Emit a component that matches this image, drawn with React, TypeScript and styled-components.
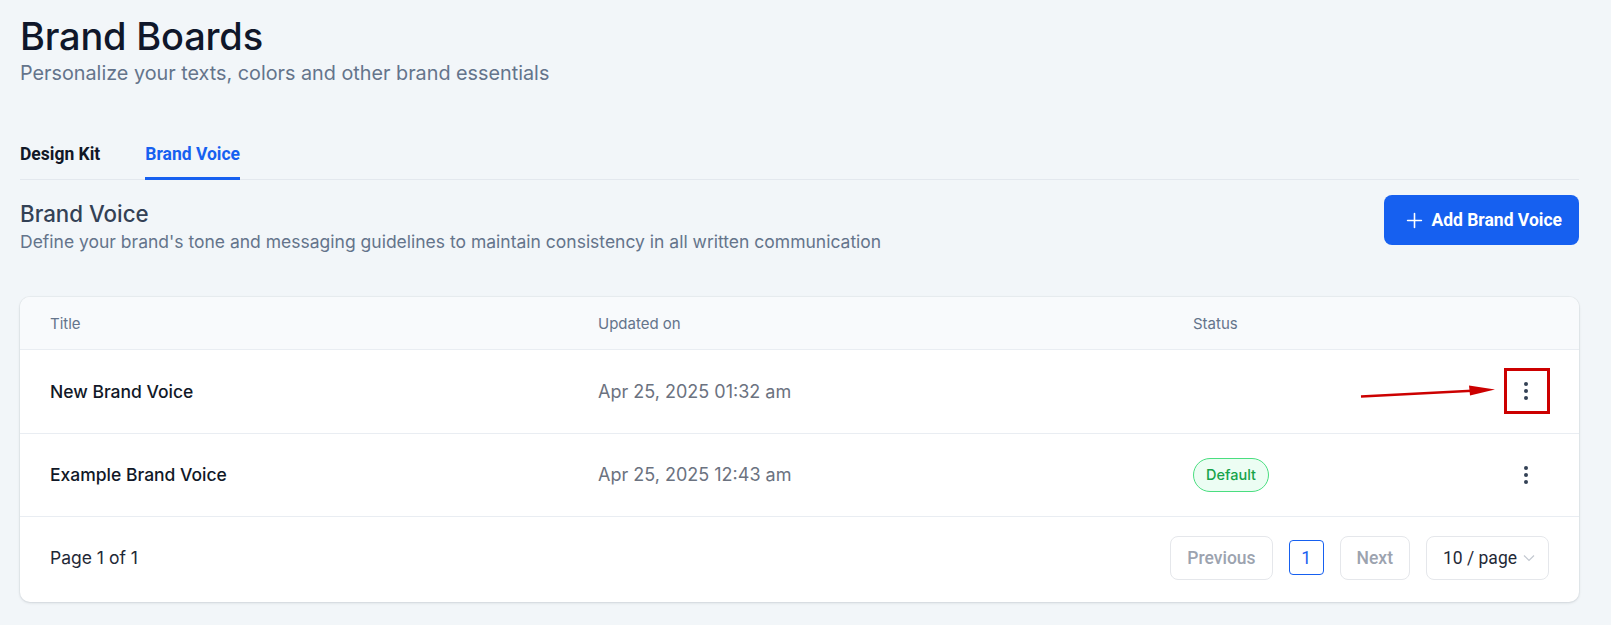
import * as React from 'react';
import styled, { createGlobalStyle } from 'styled-components';

const GlobalStyle = createGlobalStyle`
  html, body {
    margin: 0;
    padding: 0;
    background: #f2f6f9;
    font-family: Inter, "Noto Sans", sans-serif;
    color: #0f172a;
  }
  * { box-sizing: border-box; }
`;

const Page = styled.div`
  padding: 14px 32px 20px 20px;
  min-height: 625px;
`;

const PageTitle = styled.h1`
  margin: 0;
  font-size: 38px;
  line-height: 44px;
  font-weight: 500;
  color: #0f172a;
  letter-spacing: -0.2px;
`;

const PageSubtitle = styled.p`
  margin: 1px 0 0;
  font-size: 19.8px;
  line-height: 28px;
  color: #64748b;
`;

const TabBar = styled.div`
  display: flex;
  gap: 45px;
  margin-top: 55px;
  border-bottom: 1px solid #e3e8ee;
`;

const Tab = styled.button<{ $active?: boolean }>`
  appearance: none;
  background: none;
  border: none;
  padding: 0 0 11px;
  font-family: Roboto, "Liberation Sans", sans-serif;
  font-size: 17.5px;
  line-height: 24px;
  font-weight: 700;
  color: ${({ $active }) => ($active ? '#1660f0' : '#111827')};
  border-bottom: 3px solid ${({ $active }) => ($active ? '#1660f0' : 'transparent')};
  margin-bottom: -1px;
  cursor: pointer;
`;

const SectionHeader = styled.div`
  display: flex;
  justify-content: space-between;
  align-items: flex-start;
  margin-top: 15px;
`;

const SectionText = styled.div`
  padding-top: 5px;
`;

const SectionTitle = styled.h2`
  margin: 0;
  font-size: 22.3px;
  line-height: 28px;
  font-weight: 500;
  color: #334155;
`;

const SectionDesc = styled.p`
  margin: 2px 0 0;
  font-size: 17.5px;
  line-height: 24px;
  color: #64748b;
`;

const PrimaryButton = styled.button`
  display: flex;
  align-items: center;
  gap: 8px;
  height: 50px;
  padding: 0 17px 0 22px;
  border: none;
  border-radius: 8px;
  background: #1660f0;
  color: #ffffff;
  font-family: Roboto, "Liberation Sans", sans-serif;
  font-size: 17.5px;
  font-weight: 700;
  cursor: pointer;
`;

const Card = styled.div`
  margin-top: 43px;
  background: #ffffff;
  border-radius: 10px;
  box-shadow: 0 1px 3px rgba(15, 23, 42, 0.12), 0 0 0 1px rgba(15, 23, 42, 0.03);
  overflow: hidden;
`;

const Row = styled.div<{ $header?: boolean }>`
  display: grid;
  grid-template-columns: 548px 595px 1fr 42px;
  align-items: center;
  height: ${({ $header }) => ($header ? '53px' : '83.5px')};
  padding: 0 32px 0 30px;
  background: ${({ $header }) => ($header ? '#f8fafc' : '#ffffff')};
  border-bottom: 1px solid #e9edf2;
`;

const HeadCell = styled.div`
  font-size: 15px;
  color: #64748b;
`;

const TitleCell = styled.div`
  font-size: 17.5px;
  font-weight: 500;
  color: #111827;
`;

const DateCell = styled.div`
  font-size: 18px;
  color: #6b7280;
`;

const Badge = styled.span`
  display: inline-flex;
  align-items: center;
  height: 34px;
  padding: 0 12px;
  border-radius: 17px;
  border: 1px solid #4ade80;
  background: #ecfdf3;
  color: #16a34a;
  font-size: 14.5px;
  font-weight: 500;
`;

const ActionCell = styled.div`
  position: relative;
  display: flex;
  justify-content: center;
`;

const KebabButton = styled.button`
  appearance: none;
  background: none;
  border: none;
  padding: 4px;
  display: flex;
  color: #334155;
  cursor: pointer;
`;

const Highlight = styled.div`
  position: absolute;
  left: -1px;
  top: 50%;
  width: 46px;
  height: 46px;
  transform: translateY(-50%);
  border: 3px solid #cc0000;
  pointer-events: none;
`;

const Arrow = styled.svg`
  position: absolute;
  right: 48px;
  top: 50%;
  margin-top: -10px;
  pointer-events: none;
`;

const Footer = styled.div`
  display: flex;
  align-items: center;
  justify-content: space-between;
  height: 85px;
  padding: 0 30px 4px 30px;
`;

const PageInfo = styled.div`
  font-size: 17.5px;
  color: #1f2937;
`;

const Pager = styled.div`
  display: flex;
  align-items: center;
  gap: 16px;
`;

const PagerButton = styled.button`
  height: 44px;
  padding: 0 16px;
  border: 1px solid #e5e7eb;
  border-radius: 8px;
  background: #ffffff;
  color: #9ca3af;
  font-family: Roboto, "Liberation Sans", sans-serif;
  font-size: 17.5px;
  font-weight: 500;
`;

const PageNumber = styled.button`
  width: 35px;
  height: 35px;
  border: 1px solid #1660f0;
  border-radius: 4px;
  background: #ffffff;
  color: #1660f0;
  font-family: Roboto, "Liberation Sans", sans-serif;
  font-size: 17.5px;
`;

const SizeSelect = styled.button`
  display: flex;
  align-items: center;
  gap: 6px;
  height: 44px;
  padding: 0 13px 0 16px;
  border: 1px solid #e5e7eb;
  border-radius: 8px;
  background: #ffffff;
  color: #1f2937;
  font-family: Roboto, "Liberation Sans", sans-serif;
  font-size: 17.5px;
`;

const PlusIcon = () => (
  <svg width="17" height="17" viewBox="0 0 16 16" fill="none">
    <path d="M8 1.5v13M1.5 8h13" stroke="#fff" strokeWidth="1.5" strokeLinecap="round" />
  </svg>
);

const KebabIcon = () => (
  <svg width="6" height="20" viewBox="0 0 6 20">
    <circle cx="3" cy="3" r="2" fill="currentColor" />
    <circle cx="3" cy="10" r="2" fill="currentColor" />
    <circle cx="3" cy="17" r="2" fill="currentColor" />
  </svg>
);

const ChevronIcon = () => (
  <svg width="12" height="8" viewBox="0 0 12 8" fill="none">
    <path d="M1 1.5l5 5 5-5" stroke="#c3c8d0" strokeWidth="1.2" />
  </svg>
);

interface VoiceRow {
  title: string;
  updated: string;
  isDefault?: boolean;
  highlighted?: boolean;
}

const rows: VoiceRow[] = [
  { title: 'New Brand Voice', updated: 'Apr 25, 2025 01:32 am', highlighted: true },
  { title: 'Example Brand Voice', updated: 'Apr 25, 2025 12:43 am', isDefault: true },
];

export default function App() {
  const [tab, setTab] = React.useState('voice');

  return (
    <Page>
      <GlobalStyle />
      <PageTitle>Brand Boards</PageTitle>
      <PageSubtitle>Personalize your texts, colors and other brand essentials</PageSubtitle>

      <TabBar>
        <Tab $active={tab === 'kit'} onClick={() => setTab('kit')}>Design Kit</Tab>
        <Tab $active={tab === 'voice'} onClick={() => setTab('voice')}>Brand Voice</Tab>
      </TabBar>

      <SectionHeader>
        <SectionText>
          <SectionTitle>Brand Voice</SectionTitle>
          <SectionDesc>
            Define your brand's tone and messaging guidelines to maintain consistency in all written communication
          </SectionDesc>
        </SectionText>
        <PrimaryButton>
          <PlusIcon />
          Add Brand Voice
        </PrimaryButton>
      </SectionHeader>

      <Card>
        <Row $header>
          <HeadCell>Title</HeadCell>
          <HeadCell>Updated on</HeadCell>
          <HeadCell>Status</HeadCell>
          <div />
        </Row>
        {rows.map(row => (
          <Row key={row.title}>
            <TitleCell>{row.title}</TitleCell>
            <DateCell>{row.updated}</DateCell>
            <div>{row.isDefault ? <Badge>Default</Badge> : null}</div>
            <ActionCell>
              <KebabButton aria-label="More actions">
                <KebabIcon />
              </KebabButton>
              {row.highlighted ? (
                <>
                  <Highlight />
                  <Arrow width="142" height="20" viewBox="0 0 142 20">
                    <path d="M4 15.5L120 9.5" stroke="#cc0000" strokeWidth="2.6" />
                    <path d="M112 4.5L138 8.5L113 14.5Z" fill="#cc0000" />
                  </Arrow>
                </>
              ) : null}
            </ActionCell>
          </Row>
        ))}
        <Footer>
          <PageInfo>Page 1 of 1</PageInfo>
          <Pager>
            <PagerButton>Previous</PagerButton>
            <PageNumber>1</PageNumber>
            <PagerButton>Next</PagerButton>
            <SizeSelect>
              10 / page
              <ChevronIcon />
            </SizeSelect>
          </Pager>
        </Footer>
      </Card>
    </Page>
  );
}
